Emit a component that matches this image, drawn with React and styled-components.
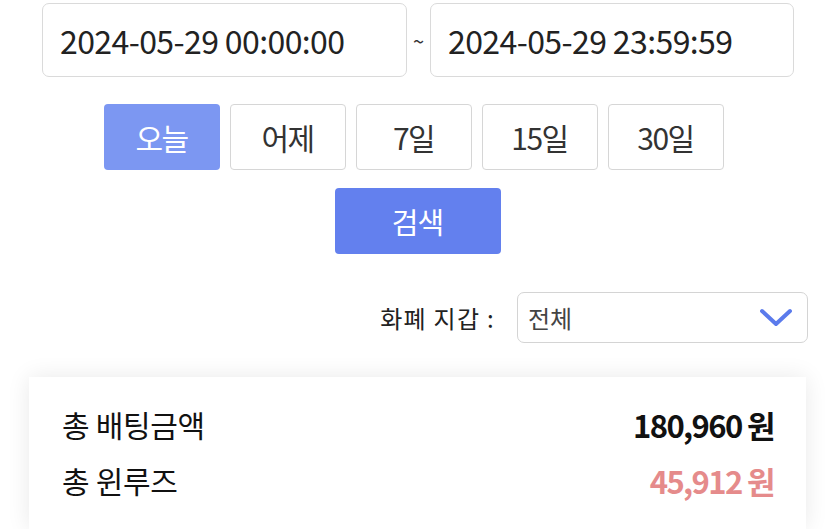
import React, { useState } from 'react';
import styled, { createGlobalStyle } from 'styled-components';

const GlobalStyle = createGlobalStyle`
  body {
    margin: 0;
    background: #ffffff;
    font-family: "Noto Sans CJK KR", "Noto Sans", sans-serif;
    color: #222;
  }
`;

const Page = styled.div`
  width: 835px;
  height: 529px;
  overflow: hidden;
  padding: 3px 29px 0 29px;
  box-sizing: border-box;
`;

const DateRow = styled.div`
  display: flex;
  align-items: center;
  padding-left: 13px;
`;

const DateInput = styled.div`
  width: ${p => p.$width}px;
  height: 74px;
  box-sizing: border-box;
  border: 1.5px solid #dadada;
  border-radius: 7px;
  display: flex;
  align-items: center;
  padding-left: 17px;
  font-size: 32px;
  color: #222;
  letter-spacing: -0.6px;
`;

const Tilde = styled.span`
  width: 23px;
  text-align: center;
  font-size: 20px;
  color: #333;
`;

const PeriodRow = styled.div`
  display: flex;
  justify-content: center;
  gap: 10px;
  margin-top: 27px;
  padding-right: 8px;
`;

const PeriodButton = styled.button`
  width: 116px;
  height: 66px;
  box-sizing: border-box;
  border-radius: 4px;
  border: ${p => (p.$active ? 'none' : '1.5px solid #d6d6d6')};
  background: ${p => (p.$active ? '#7c97f2' : '#fff')};
  color: ${p => (p.$active ? '#fff' : '#333')};
  font-family: inherit;
  font-size: 30px;
  letter-spacing: -1.5px;
  padding: 0;
`;

const SearchRow = styled.div`
  display: flex;
  justify-content: center;
  margin-top: 18px;
`;

const SearchButton = styled.button`
  width: 166px;
  height: 66px;
  border: none;
  border-radius: 4px;
  background: #6380ee;
  color: #fff;
  font-family: inherit;
  font-size: 29px;
  letter-spacing: -1px;
  padding: 0;
`;

const FilterRow = styled.div`
  display: flex;
  justify-content: flex-end;
  align-items: center;
  gap: 22px;
  margin-top: 38px;
  margin-right: -2px;
`;

const FilterLabel = styled.span`
  font-size: 24px;
  color: #222;
  letter-spacing: 1.3px;
`;

const Select = styled.div`
  width: 291px;
  height: 51px;
  box-sizing: border-box;
  border: 1.5px solid #d4d4d4;
  border-radius: 7px;
  display: flex;
  align-items: center;
  justify-content: space-between;
  padding: 0 14px 0 10px;
  font-size: 24px;
  color: #444;
`;

const Card = styled.div`
  margin-top: 34px;
  background: #fff;
  box-shadow: 0 0 22px rgba(0, 0, 0, 0.09);
  padding: 28px 32px 30px 33px;
  display: flex;
  flex-direction: column;
  gap: 18px;
`;

const SumRow = styled.div`
  display: flex;
  justify-content: space-between;
  align-items: center;
  height: 38px;
`;

const SumLabel = styled.span`
  font-size: 30px;
  color: #111;
  letter-spacing: -0.3px;
`;

const SumValue = styled.span`
  font-size: 31px;
  font-weight: 700;
  letter-spacing: -1.6px;
  color: ${p => p.$color || '#111'};
`;

const Chevron = () => (
  <svg width="34" height="20" viewBox="0 0 34 20">
    <path d="M3 3 L17 16 L31 3" fill="none" stroke="#5b7bec" strokeWidth="4" strokeLinecap="round" strokeLinejoin="round" />
  </svg>
);

const periods = ['오늘', '어제', '7일', '15일', '30일'];

export default function App() {
  const [active, setActive] = useState(0);
  return (
    <Page>
      <GlobalStyle />
      <DateRow>
        <DateInput $width={365}>2024-05-29 00:00:00</DateInput>
        <Tilde>~</Tilde>
        <DateInput $width={364}>2024-05-29 23:59:59</DateInput>
      </DateRow>
      <PeriodRow>
        {periods.map((p, i) => (
          <PeriodButton key={p} $active={i === active} onClick={() => setActive(i)}>
            {p}
          </PeriodButton>
        ))}
      </PeriodRow>
      <SearchRow>
        <SearchButton>검색</SearchButton>
      </SearchRow>
      <FilterRow>
        <FilterLabel>화폐 지갑 :</FilterLabel>
        <Select>
          <span>전체</span>
          <Chevron />
        </Select>
      </FilterRow>
      <Card>
        <SumRow>
          <SumLabel>총 배팅금액</SumLabel>
          <SumValue>180,960 원</SumValue>
        </SumRow>
        <SumRow>
          <SumLabel>총 윈루즈</SumLabel>
          <SumValue $color="#e58b8b">45,912 원</SumValue>
        </SumRow>
      </Card>
    </Page>
  );
}
